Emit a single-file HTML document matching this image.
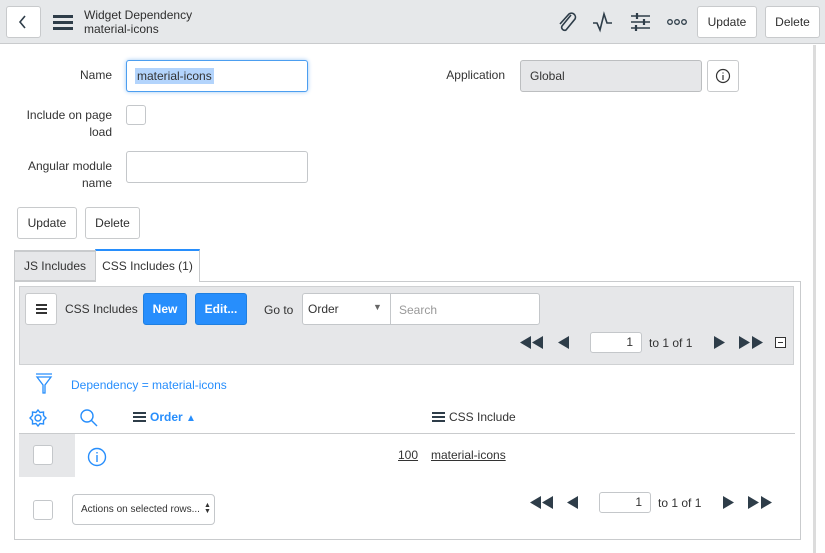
<!DOCTYPE html>
<html><head><meta charset="utf-8"><style>
*{box-sizing:border-box;margin:0;padding:0}
body{width:825px;height:553px;background:#fff;font-family:"Liberation Sans",sans-serif;font-size:12px;color:#333;position:relative;overflow:hidden}
.a{position:absolute}
.btn{position:absolute;border:1px solid #c8cacc;border-radius:3px;background:#fff;text-align:center;color:#2e2e2e;font-size:12px}
.inp{position:absolute;border:1px solid #c4c7ca;border-radius:3px;background:#fff}
.lbl{position:absolute;text-align:right;font-size:12px;color:#333;line-height:17px}
</style></head><body>
<!-- header -->
<div class="a" style="left:0;top:0;width:825px;height:44px;background:#e6e8ea;border-bottom:1px solid #c9cbcd"></div>
<div class="btn" style="left:6px;top:6px;width:35px;height:32px"></div>
<svg class="a" style="left:18px;top:15px" width="10" height="14" viewBox="0 0 10 14" fill="none" stroke="#2e3d49" stroke-width="1.6"><path d="M7 1L2 7L7 13"/></svg>
<div class="a" style="left:53px;top:15px;width:20px;height:3px;background:#2e3d49;box-shadow:0 6px 0 #2e3d49,0 12px 0 #2e3d49"></div>
<div class="a" style="left:84px;top:8px;font-size:12px;line-height:14px;color:#2e2e2e">Widget Dependency<br>material-icons</div>
<svg class="a" style="left:555px;top:10px" width="24" height="24" viewBox="0 0 24 24" fill="none" stroke="#2e3d49" stroke-width="1.6"><path d="M16 5 L7 16 a3 3 0 0 0 4 4 L20 9 a4 4 0 0 0 -6 -5 L5 14"/></svg>
<svg class="a" style="left:592px;top:11px" width="22" height="22" viewBox="0 0 22 22" fill="none" stroke="#2e3d49" stroke-width="1.6"><path d="M1 12 H5 L8 19 L12 3 L15 12 H20"/></svg>
<svg class="a" style="left:630px;top:11px" width="22" height="22" viewBox="0 0 22 22" stroke="#2e3d49" stroke-width="1.6"><path d="M1 5H20M1 11H20M1 17H20"/><path d="M7 2V8M14 8V14M6 14V20" stroke-width="2.2"/></svg>
<svg class="a" style="left:667px;top:18px" width="22" height="8" viewBox="0 0 22 8" fill="none" stroke="#2e3d49" stroke-width="1.3"><circle cx="3" cy="4" r="2.3"/><circle cx="10" cy="4" r="2.3"/><circle cx="17" cy="4" r="2.3"/></svg>
<div class="btn" style="left:697px;top:6px;width:60px;height:32px;line-height:30px">Update</div>
<div class="btn" style="left:765px;top:6px;width:55px;height:32px;line-height:30px">Delete</div>
<!-- scrollbar line -->
<div class="a" style="left:813px;top:45px;width:3px;height:508px;background:#dcdcdc"></div>
<!-- form -->
<div class="lbl" style="left:10px;top:67px;width:102px">Name</div>
<div class="inp" style="left:126px;top:60px;width:182px;height:32px;border-color:#4c9ef0;box-shadow:0 0 4px #9cc7f5"></div>
<div class="a" style="left:135px;top:68px;background:#b3d4fc;line-height:16px;padding:0 2px;color:#333">material-icons</div>
<div class="lbl" style="left:300px;top:67px;width:205px">Application</div>
<div class="inp" style="left:520px;top:60px;width:182px;height:32px;background:#e6e7e9;border-color:#bcbec0"></div>
<div class="a" style="left:530px;top:68px;line-height:16px">Global</div>
<div class="btn" style="left:707px;top:60px;width:32px;height:32px"></div>
<svg class="a" style="left:715px;top:68px" width="16" height="16" viewBox="0 0 16 16" fill="none" stroke="#333" stroke-width="1.2"><circle cx="8" cy="8" r="6.5"/><path d="M8 7V12M8 4.5V5.5"/></svg>
<div class="lbl" style="left:10px;top:107px;width:102px">Include on page<br>load</div>
<div class="inp" style="left:126px;top:105px;width:20px;height:20px"></div>
<div class="lbl" style="left:10px;top:158px;width:102px">Angular module<br>name</div>
<div class="inp" style="left:126px;top:151px;width:182px;height:32px"></div>
<div class="btn" style="left:17px;top:207px;width:60px;height:32px;line-height:30px">Update</div>
<div class="btn" style="left:85px;top:207px;width:55px;height:32px;line-height:30px">Delete</div>
<!-- tabs -->
<div class="a" style="left:14px;top:250px;width:82px;height:31px;background:#e6e7e9;border:1px solid #c9cbcd;border-top:2px solid #c9cbcd;line-height:28px;text-align:center">JS Includes</div>
<div class="a" style="left:95px;top:249px;width:105px;height:33px;background:#fff;border:1px solid #c9cbcd;border-top:2px solid #278efc;border-bottom:none;line-height:30px;text-align:center;z-index:2">CSS Includes (1)</div>
<div class="a" style="left:14px;top:281px;width:787px;height:259px;border:1px solid #c9cbcd"></div>
<div class="a" style="left:19px;top:286px;width:775px;height:79px;background:#e6e7e9;border:1px solid #cfd1d3"></div>
<div class="btn" style="left:25px;top:293px;width:32px;height:32px"></div>
<div class="a" style="left:36px;top:304px;width:11px;height:2px;background:#333;box-shadow:0 4px 0 #333,0 8px 0 #333"></div>
<div class="a" style="left:65px;top:302px">CSS Includes</div>
<div class="a" style="left:143px;top:293px;width:44px;height:32px;background:#278efc;border:1px solid #1f7fe0;border-radius:3px;color:#fff;font-weight:bold;text-align:center;line-height:30px">New</div>
<div class="a" style="left:195px;top:293px;width:52px;height:32px;background:#278efc;border:1px solid #1f7fe0;border-radius:3px;color:#fff;font-weight:bold;text-align:center;line-height:30px">Edit...</div>
<div class="a" style="left:264px;top:303px">Go to</div>
<div class="inp" style="left:302px;top:293px;width:89px;height:32px;border-radius:3px 0 0 3px"></div>
<div class="a" style="left:308px;top:302px">Order</div>
<div class="a" style="left:373px;top:302px;font-size:9px;color:#666">▼</div>
<div class="inp" style="left:390px;top:293px;width:150px;height:32px;border-radius:0 3px 3px 0"></div>
<div class="a" style="left:399px;top:303px;color:#999">Search</div>
<svg class="a" style="left:520px;top:336px" width="26" height="13" viewBox="0 0 26 13" fill="#2e3d49"><path d="M0 6.5L11 0V13ZM12 6.5L23 0V13Z"/></svg>
<svg class="a" style="left:558px;top:336px" width="12" height="13" viewBox="0 0 12 13" fill="#2e3d49"><path d="M0 6.5L11 0V13Z"/></svg>
<div class="inp" style="left:590px;top:332px;width:52px;height:21px;text-align:right;padding-right:8px;line-height:19px">1</div>
<div class="a" style="left:649px;top:336px">to 1 of 1</div>
<svg class="a" style="left:714px;top:336px" width="12" height="13" viewBox="0 0 12 13" fill="#2e3d49"><path d="M11 6.5L0 0V13Z"/></svg>
<svg class="a" style="left:739px;top:336px" width="26" height="13" viewBox="0 0 26 13" fill="#2e3d49"><path d="M11 6.5L0 0V13ZM24 6.5L13 0V13Z"/></svg>
<div class="a" style="left:775px;top:337px;width:11px;height:11px;border:1px solid #333;background:#fff"></div>
<div class="a" style="left:778px;top:342px;width:5px;height:1px;background:#333"></div>
<!-- filter -->
<svg class="a" style="left:35px;top:373px" width="18" height="22" viewBox="0 0 18 22" fill="none" stroke="#278efc" stroke-width="1.3"><path d="M1 1H17M2 4H16L10 12V20H8V12Z"/></svg>
<div class="a" style="left:71px;top:378px;color:#278efc">Dependency = material-icons</div>
<svg class="a" style="left:28px;top:408px" width="20" height="20" viewBox="0 0 20 20" fill="none" stroke="#278efc" stroke-width="1.4"><circle cx="10" cy="10" r="3"/><path d="M10 2L12 4.5L15.5 4L15.5 7.5L18 10L15.5 12.5L15.5 16L12 15.5L10 18L8 15.5L4.5 16L4.5 12.5L2 10L4.5 7.5L4.5 4L8 4.5Z"/></svg>
<svg class="a" style="left:79px;top:408px" width="20" height="20" viewBox="0 0 20 20" fill="none" stroke="#278efc" stroke-width="1.4"><circle cx="8" cy="8" r="6"/><path d="M12.5 12.5L18 18"/></svg>
<div class="a" style="left:133px;top:412px;width:13px;height:2px;background:#2e3d49;box-shadow:0 4px 0 #2e3d49,0 8px 0 #2e3d49"></div>
<div class="a" style="left:150px;top:410px;color:#278efc;font-weight:bold">Order <span style="font-size:10px">▲</span></div>
<div class="a" style="left:432px;top:412px;width:13px;height:2px;background:#2e3d49;box-shadow:0 4px 0 #2e3d49,0 8px 0 #2e3d49"></div>
<div class="a" style="left:449px;top:410px">CSS Include</div>
<div class="a" style="left:19px;top:433px;width:776px;height:1px;background:#c9cbcd"></div>
<div class="a" style="left:19px;top:434px;width:56px;height:43px;background:#e6e7e9"></div>
<div class="inp" style="left:33px;top:445px;width:20px;height:20px"></div>
<svg class="a" style="left:87px;top:447px" width="20" height="20" viewBox="0 0 20 20" fill="none" stroke="#278efc" stroke-width="1.4"><circle cx="10" cy="10" r="8.5"/><path d="M10 8V15M10 5V6.5"/></svg>
<div class="a" style="left:398px;top:448px;text-decoration:underline">100</div>
<div class="a" style="left:431px;top:448px;text-decoration:underline">material-icons</div>
<div class="inp" style="left:33px;top:500px;width:20px;height:20px"></div>
<div class="inp" style="left:72px;top:494px;width:143px;height:31px;border-radius:4px"></div>
<div class="a" style="left:81px;top:504px;font-size:10px">Actions on selected rows...</div>
<div class="a" style="left:204px;top:503px;font-size:7px;line-height:6px">▲<br>▼</div>
<svg class="a" style="left:530px;top:496px" width="26" height="13" viewBox="0 0 26 13" fill="#2e3d49"><path d="M0 6.5L11 0V13ZM12 6.5L23 0V13Z"/></svg>
<svg class="a" style="left:567px;top:496px" width="12" height="13" viewBox="0 0 12 13" fill="#2e3d49"><path d="M0 6.5L11 0V13Z"/></svg>
<div class="inp" style="left:599px;top:492px;width:52px;height:21px;text-align:right;padding-right:8px;line-height:19px">1</div>
<div class="a" style="left:658px;top:496px">to 1 of 1</div>
<svg class="a" style="left:723px;top:496px" width="12" height="13" viewBox="0 0 12 13" fill="#2e3d49"><path d="M11 6.5L0 0V13Z"/></svg>
<svg class="a" style="left:748px;top:496px" width="26" height="13" viewBox="0 0 26 13" fill="#2e3d49"><path d="M11 6.5L0 0V13ZM24 6.5L13 0V13Z"/></svg>
</body></html>
